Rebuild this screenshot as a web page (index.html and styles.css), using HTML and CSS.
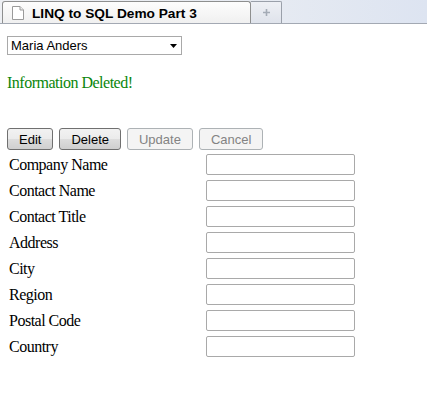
FILE: index.html
```html
<!DOCTYPE html>
<html>
<head>
<meta charset="utf-8">
<link rel="stylesheet" href="styles.css">
</head>
<body>
<div class="tabbar">
  <div class="tab">
    <svg class="page-icon" width="12" height="14" viewBox="0 0 12 14">
      <path d="M0.5 0.5 H8 L11.5 4 V13.5 H0.5 Z" fill="#fff" stroke="#9a9a9a"/>
      <path d="M8 0.5 V4 H11.5" fill="#eee" stroke="#9a9a9a"/>
    </svg>
    <span class="tab-title">LINQ to SQL Demo Part 3</span>
  </div>
  <div class="newtab">
    <svg width="9" height="9" viewBox="0 0 9 9">
      <path d="M4.5 1 V8 M1 4.5 H8" stroke="#a4abb6" stroke-width="1.6"/>
    </svg>
  </div>
</div>
<div class="content">
  <div class="select">
    <span>Maria Anders</span>
    <svg class="arrow" width="7" height="4" viewBox="0 0 7 4"><path d="M0 0 H7 L3.5 4 Z" fill="#000"/></svg>
  </div>
  <p class="status">Information Deleted!</p>
  <div class="buttons">
    <button class="btn">Edit</button>
    <button class="btn">Delete</button>
    <button class="btn" disabled>Update</button>
    <button class="btn" disabled>Cancel</button>
  </div>
  <div class="form">
    <label>Company Name</label><input type="text">
    <label>Contact Name</label><input type="text">
    <label>Contact Title</label><input type="text">
    <label>Address</label><input type="text">
    <label>City</label><input type="text">
    <label>Region</label><input type="text">
    <label>Postal Code</label><input type="text">
    <label>Country</label><input type="text">
  </div>
</div>
</body>
</html>
```
FILE: styles.css
```css
html, body {
  margin: 0;
  padding: 0;
  background: #fff;
}
body {
  font-family: "Liberation Serif", "Times New Roman", serif;
  font-size: 16px;
  letter-spacing: -0.5px;
  color: #000;
}
.tabbar {
  height: 23px;
  border-bottom: 1px solid #a3a9b3;
  background: linear-gradient(to right, #eef0f4 0%, #e7ebf2 60%, #dde4f1 100%);
  display: flex;
  align-items: flex-end;
  padding-left: 2px;
}
.tab {
  width: 249px;
  height: 22px;
  border: 1px solid #8e8f8f;
  border-bottom: none;
  border-radius: 3px 3px 0 0;
  background: linear-gradient(#fdfdfd, #f0f0f0);
  display: flex;
  align-items: center;
  padding-left: 9px;
  gap: 8px;
  box-sizing: border-box;
}
.page-icon {
  flex: none;
}
.tab-title {
  font-family: "Liberation Sans", Arial, sans-serif;
  font-weight: bold;
  font-size: 13.7px;
  letter-spacing: 0;
  color: #000;
  padding-top: 1px;
}
.newtab {
  width: 31px;
  height: 22px;
  border: 1px solid #9aa0aa;
  border-left: none;
  border-bottom: none;
  border-radius: 0 2px 0 0;
  background: linear-gradient(#eef0f5, #dfe3eb);
  box-sizing: border-box;
  display: flex;
  align-items: center;
  justify-content: center;
}
.content {
  padding: 12px 0 0 7px;
}
.select {
  width: 175px;
  height: 19px;
  box-sizing: border-box;
  border: 1px solid #a9a9a9;
  display: flex;
  align-items: center;
  justify-content: space-between;
  padding: 0 4px 0 3px;
  font-family: "Liberation Sans", Arial, sans-serif;
  font-size: 13px;
  letter-spacing: 0;
}
.status {
  margin: 19px 0 0 0;
  color: #0a860a;
  font-size: 16px;
  line-height: 18px;
}
.buttons {
  display: flex;
  gap: 6px;
  margin-top: 36px;
}
.btn {
  font-family: "Liberation Sans", Arial, sans-serif;
  font-size: 13px;
  letter-spacing: 0;
  height: 22px;
  padding: 0 11px;
  border: 1px solid #707070;
  border-radius: 3px;
  background: linear-gradient(#f2f2f2 0%, #ebebeb 50%, #dddddd 51%, #cfcfcf 100%);
  color: #000;
}
.btn:disabled {
  border-color: #adb2b5;
  background: #f4f4f4;
  color: #838383;
}
.form {
  display: grid;
  grid-template-columns: 197px 149px;
  grid-auto-rows: 26px;
  align-items: center;
  margin-top: 1px;
  padding-left: 2px;
}
.form label {
  line-height: 18px;
  padding-top: 2px;
}
.form input {
  height: 21px;
  width: 149px;
  box-sizing: border-box;
  border: 1px solid #a9a9a9;
  border-radius: 2px;
  margin: 0;
  padding: 0;
}
```
